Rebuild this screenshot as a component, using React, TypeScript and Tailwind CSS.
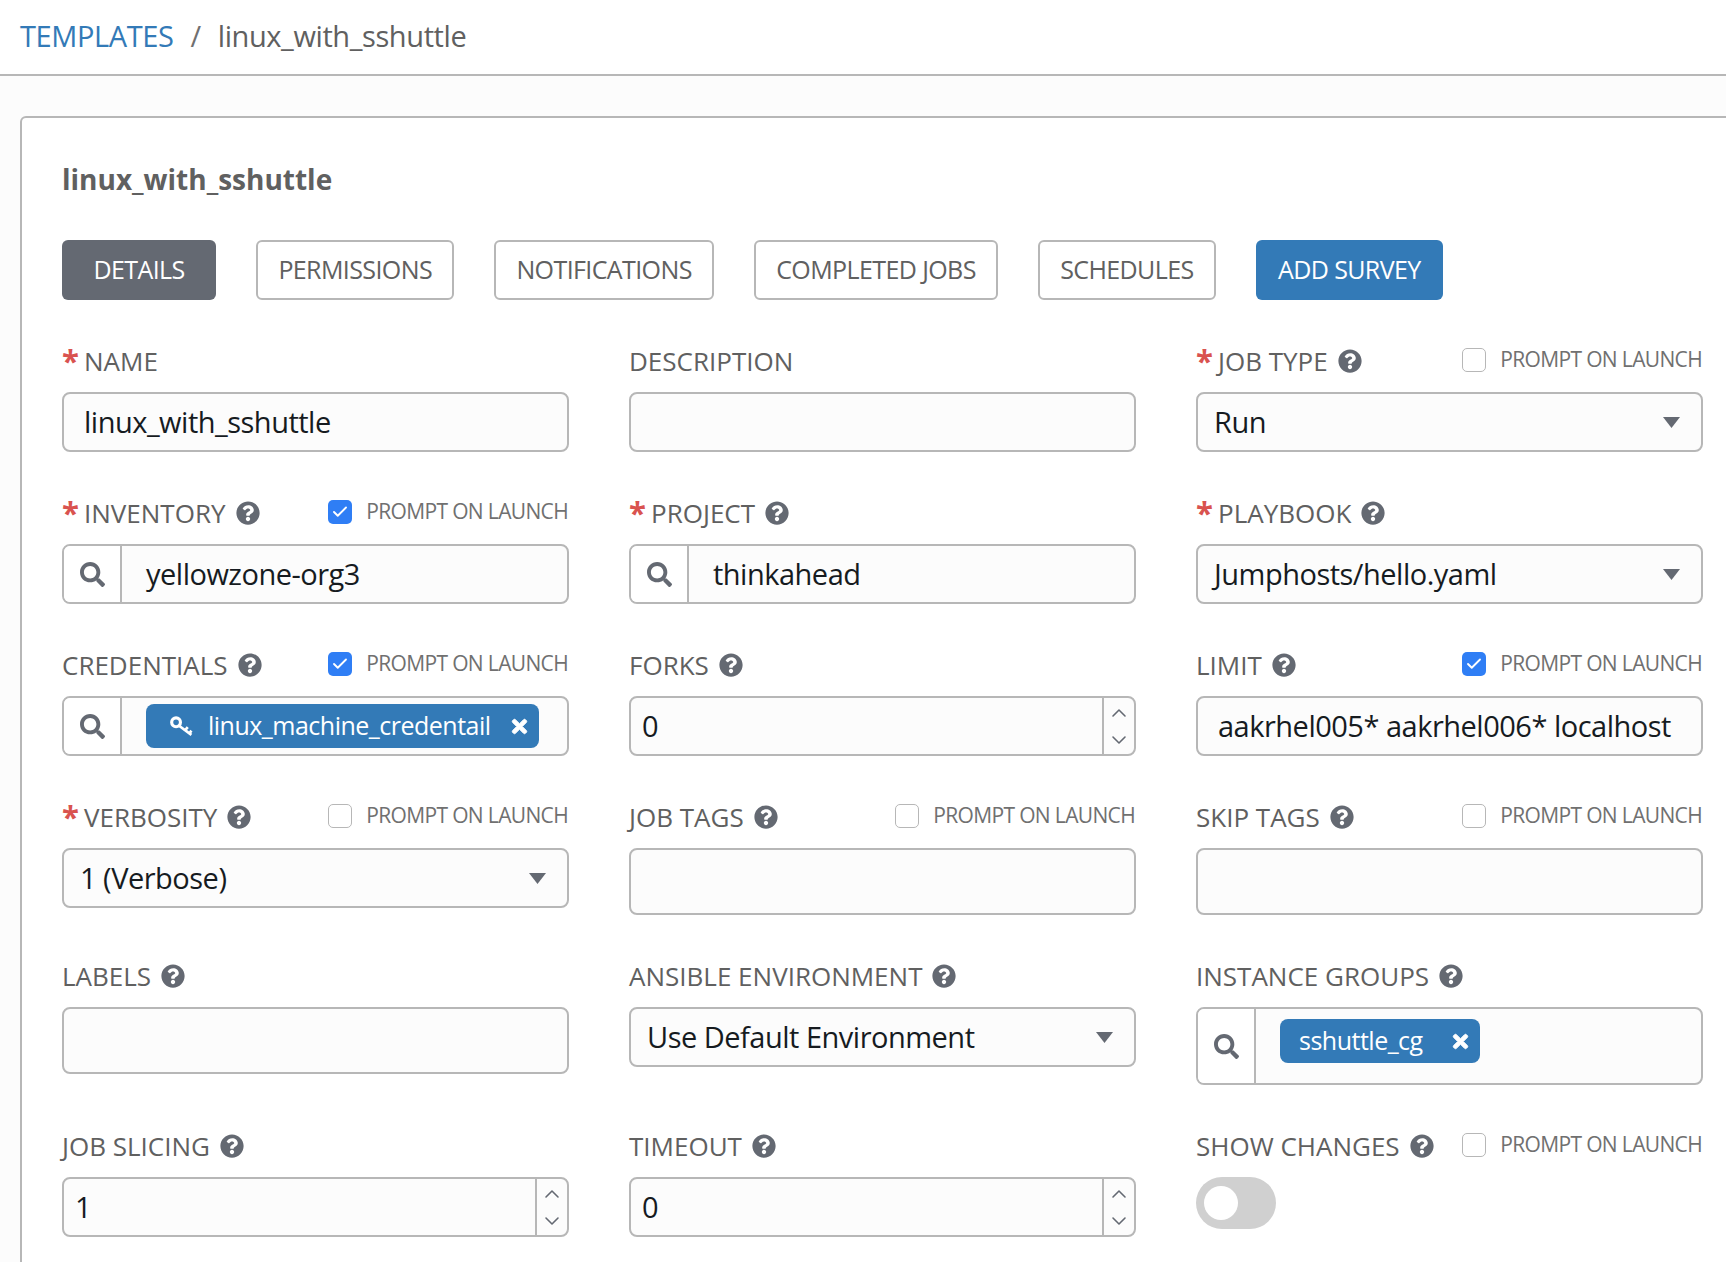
import type { ReactNode } from "react";
import { Check, ChevronDown, ChevronUp } from "lucide-react";
import { FaQuestionCircle, FaSearch, FaTimes } from "react-icons/fa";

const TABS = ["PERMISSIONS", "NOTIFICATIONS", "COMPLETED JOBS", "SCHEDULES"];

function Label({
  text,
  required,
  help,
  prompt,
}: {
  text: string;
  required?: boolean;
  help?: boolean;
  prompt?: "on" | "off";
}) {
  return (
    <div className="mb-[12px] flex h-[38px] items-center justify-between pr-[1px] text-[#606060]">
      <div className="flex items-center">
        {required && <span className="relative -top-[1px] w-[22px] text-[31px] leading-none font-bold text-[#d9534f]">*</span>}
        <span className="text-[26px]">{text}</span>
        {help && <FaQuestionCircle className="ml-[10px] text-[#646972]" size={24} />}
      </div>
      {prompt && (
        <div className="relative -top-[1px] flex items-center gap-[14px]">
          {prompt === "on" ? (
            <div className="flex h-[24px] w-[24px] items-center justify-center rounded-[5px] bg-[#2f7ef5]">
              <Check className="text-white" size={18} strokeWidth={2.5} />
            </div>
          ) : (
            <div className="h-[24px] w-[24px] rounded-[5px] border border-[#b7b7b7] bg-white" />
          )}
          <span className="text-[21px] tracking-[-0.65px] text-[#707070]">PROMPT ON LAUNCH</span>
        </div>
      )}
    </div>
  );
}

function Box({ children, tall }: { children?: ReactNode; tall?: boolean }) {
  return (
    <div
      className={`flex items-center rounded-[8px] border-2 border-[#b7b7b7] bg-[#fcfcfc] text-[29px] tracking-[-0.5px] text-[#161b1f] ${
        tall ? "h-[67px]" : "h-[60px]"
      }`}
    >
      {children}
    </div>
  );
}

function TextValue({ value }: { value: string }) {
  return <span className="pl-[20px]">{value}</span>;
}

function SelectBox({ value }: { value: string }) {
  return (
    <Box>
      <span className="flex-1 pl-[16px]">{value}</span>
      <svg className="mr-[21px]" width="17" height="11" viewBox="0 0 17 11">
        <path d="M0 0h17L8.5 11z" fill="#646972" />
      </svg>
    </Box>
  );
}

function NumberBox({ value }: { value: string }) {
  return (
    <Box>
      <span className="flex-1 pl-[11px]">{value}</span>
      <div className="flex h-full w-[32px] flex-col items-center justify-center gap-[3px] border-l-2 border-[#b7b7b7] text-[#646972]">
        <ChevronUp size={24} strokeWidth={1.6} />
        <ChevronDown size={24} strokeWidth={1.6} />
      </div>
    </Box>
  );
}

function KeyIcon() {
  return (
    <svg className="mr-[15px]" width="23" height="21" viewBox="0 0 22 20" fill="none" stroke="currentColor">
      <circle cx="5.8" cy="6" r="4.2" strokeWidth="3" />
      <path d="M9 9.5l11.5 8.5M14.5 13.5l2.5-3M18.5 16.5l2-2.5" strokeWidth="2.6" />
    </svg>
  );
}

function Chip({ text, icon, left, gap }: { text: string; icon?: boolean; left: string; gap: string }) {
  return (
    <div className={`flex h-[44px] items-center rounded-[8px] bg-[#337ab7] text-[25px] tracking-[-0.5px] text-white ${left}`}>
      {icon && <KeyIcon />}
      <span>{text}</span>
      <FaTimes className={`stroke-current stroke-[24] ${gap}`} size={21} />
    </div>
  );
}

function Lookup({ children, tall }: { children: ReactNode; tall?: boolean }) {
  return (
    <div
      className={`flex rounded-[8px] border-2 border-[#b7b7b7] bg-[#fcfcfc] text-[29px] tracking-[-0.5px] text-[#161b1f] ${
        tall ? "h-[78px]" : "h-[60px]"
      }`}
    >
      <div className="flex w-[58px] items-center justify-center rounded-l-[6px] border-r-2 border-[#b7b7b7] bg-white text-[#646972]">
        <FaSearch size={25} />
      </div>
      {children}
    </div>
  );
}

export default function App() {
  return (
    <div
      className="h-[1262px] w-[1726px] overflow-hidden bg-[#fcfcfc]"
      style={{ fontFamily: '"Open Sans", "Noto Sans", sans-serif' }}
    >
      <div className="flex h-[76px] items-center gap-[17px] border-b-2 border-[#b7b7b7] bg-white pb-[2px] pl-[20px] text-[29px] tracking-[-0.4px]">
        <span className="text-[#337ab7]">TEMPLATES</span>
        <span className="text-[#707070]">/</span>
        <span className="text-[#606060]">linux_with_sshuttle</span>
      </div>

      <div className="mt-[40px] ml-[20px] w-[1800px] rounded-[6px] border-2 border-[#b7b7b7] bg-white pt-[40px] pb-[200px] pl-[40px]">
        <div className="mb-[40px] text-[28px] leading-[42px] font-bold text-[#606060]">linux_with_sshuttle</div>

        <div className="mb-[42px] flex gap-[40.4px] text-[25px] tracking-[-0.6px]">
          <div className="flex h-[60px] w-[154px] items-center justify-center rounded-[6px] bg-[#646972] text-white">DETAILS</div>
          {TABS.map((tab) => (
            <div key={tab} className="flex h-[60px] items-center rounded-[6px] border-2 border-[#b7b7b7] bg-white px-[20px] text-[#606060]">
              {tab}
            </div>
          ))}
          <div className="flex h-[60px] items-center rounded-[6px] bg-[#337ab7] px-[22px] text-white">ADD SURVEY</div>
        </div>

        <div className="grid w-[1641px] grid-cols-[507px_507px_507px] items-start gap-x-[60px] gap-y-[42px]">
          <div>
            <Label text="NAME" required />
            <Box>
              <TextValue value="linux_with_sshuttle" />
            </Box>
          </div>
          <div>
            <Label text="DESCRIPTION" />
            <Box />
          </div>
          <div>
            <Label text="JOB TYPE" required help prompt="off" />
            <SelectBox value="Run" />
          </div>

          <div>
            <Label text="INVENTORY" required help prompt="on" />
            <Lookup>
              <div className="flex items-center pl-[24px]">yellowzone-org3</div>
            </Lookup>
          </div>
          <div>
            <Label text="PROJECT" required help />
            <Lookup>
              <div className="flex items-center pl-[24px]">thinkahead</div>
            </Lookup>
          </div>
          <div>
            <Label text="PLAYBOOK" required help />
            <SelectBox value="Jumphosts/hello.yaml" />
          </div>

          <div>
            <Label text="CREDENTIALS" help prompt="on" />
            <Lookup>
              <div className="flex items-center pl-[24px]">
                <Chip text="linux_machine_credentail" icon left="pl-[24px] pr-[9px]" gap="ml-[18px]" />
              </div>
            </Lookup>
          </div>
          <div>
            <Label text="FORKS" help />
            <NumberBox value="0" />
          </div>
          <div>
            <Label text="LIMIT" help prompt="on" />
            <Box>
              <TextValue value="aakrhel005* aakrhel006* localhost" />
            </Box>
          </div>

          <div>
            <Label text="VERBOSITY" required help prompt="off" />
            <SelectBox value="1 (Verbose)" />
          </div>
          <div>
            <Label text="JOB TAGS" help prompt="off" />
            <Box tall />
          </div>
          <div>
            <Label text="SKIP TAGS" help prompt="off" />
            <Box tall />
          </div>

          <div>
            <Label text="LABELS" help />
            <Box tall />
          </div>
          <div>
            <Label text="ANSIBLE ENVIRONMENT" help />
            <SelectBox value="Use Default Environment" />
          </div>
          <div>
            <Label text="INSTANCE GROUPS" help />
            <Lookup tall>
              <div className="pt-[10px] pl-[24px]">
                <Chip text="sshuttle_cg" left="pl-[19px] pr-[9px]" gap="ml-[27px]" />
              </div>
            </Lookup>
          </div>

          <div>
            <Label text="JOB SLICING" help />
            <NumberBox value="1" />
          </div>
          <div>
            <Label text="TIMEOUT" help />
            <NumberBox value="0" />
          </div>
          <div>
            <Label text="SHOW CHANGES" help prompt="off" />
            <div className="flex h-[52px] w-[80px] items-center rounded-full bg-[#d0d0d0] pl-[8px]">
              <div className="h-[34px] w-[34px] rounded-full bg-white" />
            </div>
          </div>
        </div>
      </div>
    </div>
  );
}
